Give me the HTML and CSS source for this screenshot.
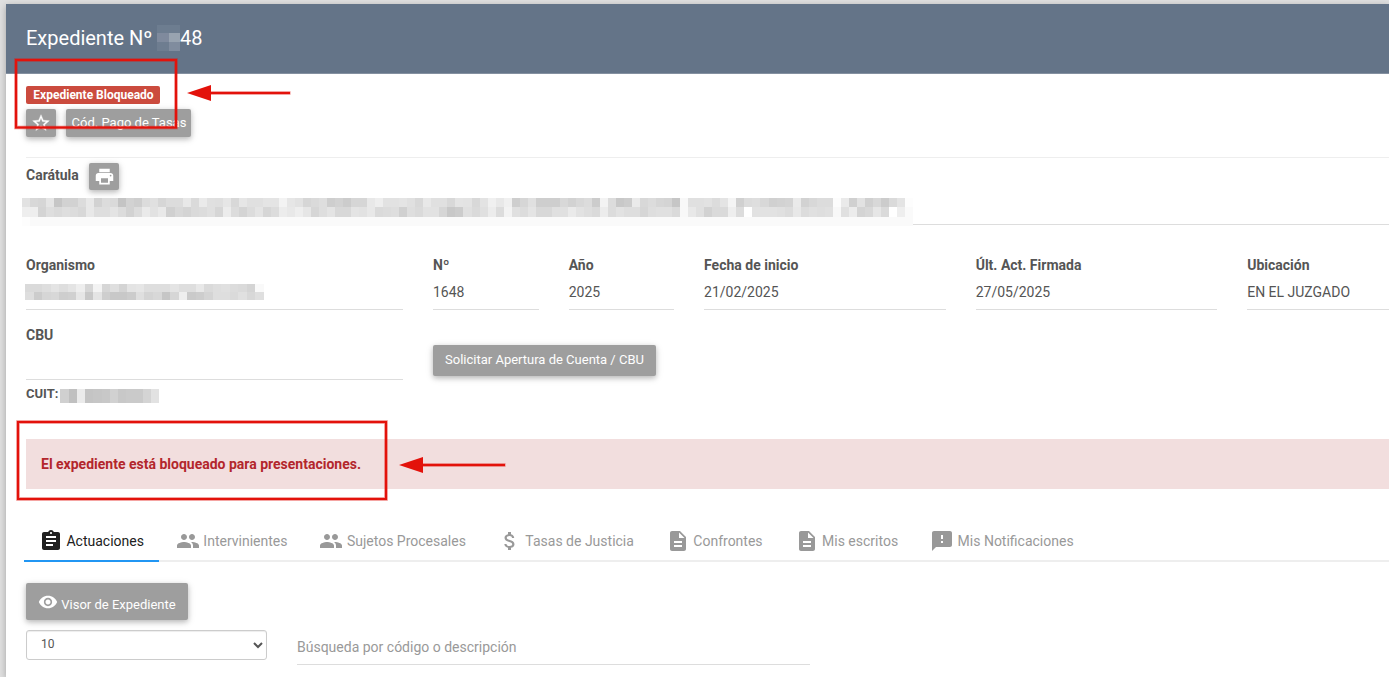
FILE: index.html
```html
<!DOCTYPE html>
<html lang="es">
<head>
<meta charset="utf-8">
<title>Expediente</title>
<link rel="stylesheet" href="styles.css">
</head>
<body>
<svg class="defs" width="0" height="0">
  <symbol id="people" viewBox="0 0 24 24"><path d="M16 11c1.66 0 2.99-1.34 2.99-3S17.66 5 16 5s-3 1.34-3 3 1.34 3 3 3zm-8 0c1.66 0 2.99-1.34 2.99-3S9.66 5 8 5 5 6.34 5 8s1.34 3 3 3zm0 2c-2.33 0-7 1.17-7 3.5V19h14v-2.500c0-2.330-4.670-3.500-7-3.500zm8 0c-.29 0-.62.02-.97.05 1.160.840 1.970 1.970 1.970 3.450V19h6v-2.500c0-2.330-4.670-3.500-7-3.500z"/></symbol>
  <symbol id="doc" viewBox="0 0 24 24"><path d="M14 2H6c-1.100 0-1.990.9-1.990 2L4 20c0 1.100.89 2 1.990 2H18c1.100 0 2-.9 2-2V8l-6-6zm2 16H8v-2h8v2zm0-4H8v-2h8v2zm-3-5V3.500L18.500 9H13z"/></symbol>
</svg>
<main class="card">
  <header class="card-header"><h1>Expediente Nº</h1><span class="mosaic mosaic-title" data-rows="6d7d906d7d90|7f8a9d98a3b0|6e7d90808c9e"></span><h1>48</h1></header>
  <div class="content">
    <div class="status"><span class="badge">Expediente Bloqueado</span></div>
    <div class="actions">
      <button class="btn btn-icon"><svg width="20" height="20" viewBox="0 0 24 24"><path d="M22 9.240l-7.190-.62L12 2 9.190 8.630 2 9.240l5.460 4.730L5.820 21 12 17.270 18.180 21l-1.630-7.030L22 9.240zM12 15.400l-3.760 2.270 1-4.280-3.320-2.880 4.380-.38L12 6.100l1.710 4.040 4.380.38-3.320 2.880 1 4.280L12 15.400z"/></svg></button>
      <button class="btn btn-small">Cód. Pago de Tasas</button>
    </div>
    <div class="caption"><b>Carátula</b>
      <button class="btn btn-print"><svg width="21" height="21" viewBox="0 0 24 24"><path d="M19 8H5c-1.660 0-3 1.340-3 3v6h4v4h12v-4h4v-6c0-1.660-1.340-3-3-3zm-3 11H8v-5h8v5zm3-7c-.55 0-1-.45-1-1s.45-1 1-1 1 .45 1 1-.45 1-1 1zm-1-9H6v4h12V3z"/></svg></button>
    </div>
    <div class="caption-value"><span class="mosaic mosaic-caption" data-gray="e2d8d6e5c6d2d2dce8d2dcdac4d2cedce0d6dcdce8daeae0dfe6d8e6e0e0e4e4f3e6e2d6dadeced2ccd6d6e8eee2e2e4e0d8e8e0e0d8e4e3d8e3f0e8f0ced6e0cececed8d2d8dcccf3dcc8ccead8dcd6d4c6f8e0e0e2dce4f4d0dcded8d0d2d4ead2d8dcdcfcead0e2d0d8ccdae4fd|eeeed4dedadedcd8e8dedee4dcd2dceae2e9d0d8d4dadce0d6ecdcd4dce4d6dcece8eee6d6dee4d8d8e4e2e8dadcded0dedae2e2d6c8cce0dae0ecdcf3e0dce4d8d8e0e0eae2dedaecdce2deded6dee0e0daf8e8e0d2dadaeedcffe2e2e2e0dce8dce0dee0f8e0ecd4d8e6daffeefa|fdfa"></span></div>
    <section class="fields">
      <div class="field"><b>Organismo</b><div class="value"><span class="mosaic mosaic-org" data-gray="dadadee4dee4eed6f3d6dfd4e4e6dededee4dedee8dadee0dcdad4f9|deccd6d8ced0e6c8e4cec8c8ccdfd4d8c6d6eecacdd4dededae0d8dfeb"></span></div></div>
      <div class="field"><b>Nº</b><div class="value">1648</div></div>
      <div class="field"><b>Año</b><div class="value">2025</div></div>
      <div class="field"><b>Fecha de inicio</b><div class="value">21/02/2025</div></div>
      <div class="field"><b>Últ. Act. Firmada</b><div class="value">27/05/2025</div></div>
      <div class="field"><b>Ubicación</b><div class="value">EN EL JUZGADO</div></div>
    </section>
    <section class="fields account">
      <div class="field"><b>CBU</b><div class="value cbu"></div></div>
      <button class="btn btn-account">Solicitar Apertura de Cuenta / CBU</button>
    </section>
    <div class="cuit"><b>CUIT:</b><span class="mosaic mosaic-cuit" data-gray="d0c0ebc4c6c8d1c8cacad4e2"></span></div>
    <div class="alert">El expediente está bloqueado para presentaciones.</div>
    <nav class="tabs">
      <a class="tab active"><svg viewBox="0 0 24 24"><path d="M19 3h-4.180C14.400 1.840 13.300 1 12 1c-1.300 0-2.400.84-2.820 2H5c-1.100 0-2 .9-2 2v14c0 1.100.9 2 2 2h14c1.100 0 2-.9 2-2V5c0-1.100-.9-2-2-2zm-7 0c.55 0 1 .45 1 1s-.45 1-1 1-1-.45-1-1 .45-1 1-1zm2 14H7v-2h7v2zm3-4H7v-2h10v2zm0-4H7V7h10v2z"/></svg><span>Actuaciones</span></a>
      <a class="tab"><svg><use href="#people"/></svg><span>Intervinientes</span></a>
      <a class="tab"><svg><use href="#people"/></svg><span>Sujetos Procesales</span></a>
      <a class="tab"><svg viewBox="0 0 24 24"><path d="M11.800 10.900c-2.270-.59-3-1.200-3-2.150 0-1.090 1.010-1.850 2.700-1.850 1.780 0 2.440.85 2.500 2.100h2.210c-.07-1.720-1.120-3.300-3.210-3.810V3h-3v2.160c-1.940.42-3.500 1.680-3.500 3.610 0 2.310 1.910 3.460 4.700 4.130 2.500.6 3 1.480 3 2.410 0 .69-.49 1.790-2.700 1.790-2.060 0-2.870-.92-2.980-2.100h-2.200c.12 2.190 1.760 3.420 3.680 3.830V21h3v-2.150c1.950-.37 3.500-1.500 3.500-3.550 0-2.840-2.430-3.810-4.700-4.400z"/></svg><span>Tasas de Justicia</span></a>
      <a class="tab"><svg><use href="#doc"/></svg><span>Confrontes</span></a>
      <a class="tab"><svg><use href="#doc"/></svg><span>Mis escritos</span></a>
      <a class="tab"><svg viewBox="0 0 24 24"><path d="M20 2H4c-1.100 0-1.990.9-1.990 2L2 22l4-4h14c1.100 0 2-.9 2-2V4c0-1.100-.9-2-2-2zm-7 12h-2v-2h2v2zm0-4h-2V6h2v4z"/></svg><span>Mis Notificaciones</span></a>
    </nav>
    <button class="btn btn-viewer"><svg width="20" height="20" viewBox="0 0 24 24"><path d="M12 4.500C7 4.500 2.730 7.610 1 12c1.730 4.390 6 7.500 11 7.500s9.270-3.110 11-7.500c-1.730-4.390-6-7.500-11-7.500zM12 17c-2.760 0-5-2.240-5-5s2.240-5 5-5 5 2.240 5 5-2.240 5-5 5zm0-8c-1.660 0-3 1.340-3 3s1.340 3 3 3 3-1.340 3-3-1.340-3-3-3z"/></svg><span>Visor de Expediente</span></button>
    <div class="filters">
      <select><option>10</option></select>
      <input type="text" placeholder="Búsqueda por código o descripción">
    </div>
  </div>
</main>
<svg class="annotations" width="1389" height="677">
  <g class="halo"><rect x="16" y="60" width="160" height="67.500"/><rect x="18" y="422" width="368" height="77"/><path d="M210 93H290.500M422 465H505.500"/></g>
  <g class="mark"><rect x="16" y="60" width="160" height="67.500"/><rect x="18" y="422" width="368" height="77"/><path d="M210 93H290M422 465H505"/></g>
  <path class="head" d="M187 93L211 85V101ZM399 465L423 457V473Z"/>
</svg>
<script src="mosaic.js"></script>
</body>
</html>
```
FILE: styles.css
```css
* { box-sizing: border-box; }
body { margin: 0; height: 677px; padding: 4px 0 0 6px; overflow: hidden; background: #e0e0e0; color: #555; font: 14px/20px Roboto, sans-serif; }
button, input, select { font-family: Roboto, sans-serif; margin: 0; }
svg { fill: currentColor; flex: none; }
.defs { position: absolute; }
.card { height: 673px; background: #fff; box-shadow: 0 2px 7px rgba(0,0,0,.28); }
.card-header { height: 70px; padding: 0 20px 2px; display: flex; align-items: center; color: #fff; background: #647488; border-bottom: 1px solid #8490a0; }
h1 { margin: 0; font-size: 20px; font-weight: 400; line-height: 28px; }
.mosaic { display: grid; flex: none; }
.mosaic-title { width: 23px; height: 26px; margin: 0 -.5px 0 5px; }
.content { padding: 12px 0 0 20px; }
.status { height: 23px; display: flex; }
.badge { width: 134px; height: 18px; padding-left: 1px; line-height: 18px; border-radius: 2px; background: #cb4b3e; color: #fff; font-size: 12px; font-weight: 700; text-align: center; }
.btn { border: 0; padding: 0; border-radius: 2px; background: #9e9e9e; color: #fff; font-size: 13px; display: flex; align-items: center; justify-content: center; box-shadow: 0 2px 5px rgba(0,0,0,.2), 0 2px 8px rgba(0,0,0,.12); }
.actions { height: 49px; border-bottom: 1px solid #eee; display: flex; gap: 10px; align-items: flex-start; }
.btn-icon { width: 30px; height: 28px; }
.btn-icon path { stroke: currentColor; stroke-width: .4px; }
.btn-small { width: 125px; height: 28px; padding: 0 0 2px 1px; }
.caption { height: 40px; padding-top: 5px; display: flex; gap: 10px; }
.caption b { line-height: 24px; }
.btn-print { width: 30px; height: 27px; padding-left: 1px; }
.caption-value { height: 27px; border-bottom: 1px solid #ddd; }
.mosaic-caption { width: 891px; height: 28px; margin-left: -4px; }
.fields { margin-top: 30px; display: grid; grid-template-columns: 377px 105.700px 105.400px 241.600px 241.500px 1fr; column-gap: 30px; }
.field b { display: block; height: 20px; }
.value { height: 35px; padding-top: 7px; border-bottom: 1px solid #ddd; }
.mosaic-org { width: 239px; height: 16px; margin-left: -1px; margin-top: 2px; }
.account { margin-top: 15px; }
.btn-account { width: 223px; height: 31px; margin-top: 20px; padding-bottom: 2px; }
.cuit { height: 59px; padding-top: 4px; display: flex; font-size: 13px; }
.mosaic-cuit { width: 99px; height: 14px; margin: 5px 0 0 2px; }
.alert { height: 50px; padding-left: 15px; line-height: 50px; background: #f2dede; color: #b3262c; font-weight: 700; }
.tabs { height: 73px; margin-left: -2px; padding-top: 31px; display: flex; gap: 2px; box-shadow: inset 0 -2px #eee; }
.tab { height: 42px; padding: 0 15px 2px; display: flex; align-items: center; gap: 3.450px; color: #999; white-space: nowrap; }
.tab svg { width: 24px; height: 24px; margin-top: 2px; }
.tab span { padding-top: 2px; }
.tab.active { color: #212121; border-bottom: 2px solid #2196f3; padding-bottom: 0; }
.btn-viewer { width: 162px; height: 37px; margin-top: 21px; gap: 3px; }
.btn-viewer span { padding-top: 6px; }
.filters { display: flex; gap: 30px; margin-top: 10px; }
.filters select { width: 241px; height: 30px; padding: 0 0 2px 10px; border: 1px solid #ccc; border-radius: 3px; background: #fff; color: #555; font-size: 12px; box-shadow: inset 0 1px 1px rgba(0,0,0,.075); }
.filters input { width: 513px; height: 35px; padding: 0; border: 0; border-bottom: 1px solid #ddd; outline: 0; background: none; font-size: 14px; }
.filters input::placeholder { color: #999; }
.annotations { position: absolute; left: 0; top: 0; pointer-events: none; }
.halo { fill: none; stroke: #e3120b; stroke-width: 3.500px; opacity: .5; }
.mark { fill: none; stroke: #e3120b; stroke-width: 2px; }
.head { fill: #e3120b; }
```
FILE: mosaic.js
```javascript
// Fills each redaction block with its grid of flat cells.
document.querySelectorAll('.mosaic').forEach(function (el) {
  var gray = el.dataset.gray;
  var rows = (gray || el.dataset.rows).split('|');
  var step = gray ? 2 : 6;
  var cols = rows[0].length / step;
  el.style.gridTemplateColumns = 'repeat(' + cols + ', 1fr)';
  el.style.gridTemplateRows = 'repeat(' + rows.length + ', 1fr)';
  rows.forEach(function (row) {
    for (var i = 0; i < cols; i++) {
      var hex = row.substr(i * step, step) || 'fa';
      var cell = document.createElement('i');
      cell.style.background = '#' + (gray ? hex + hex + hex : hex);
      el.appendChild(cell);
    }
  });
});
```
